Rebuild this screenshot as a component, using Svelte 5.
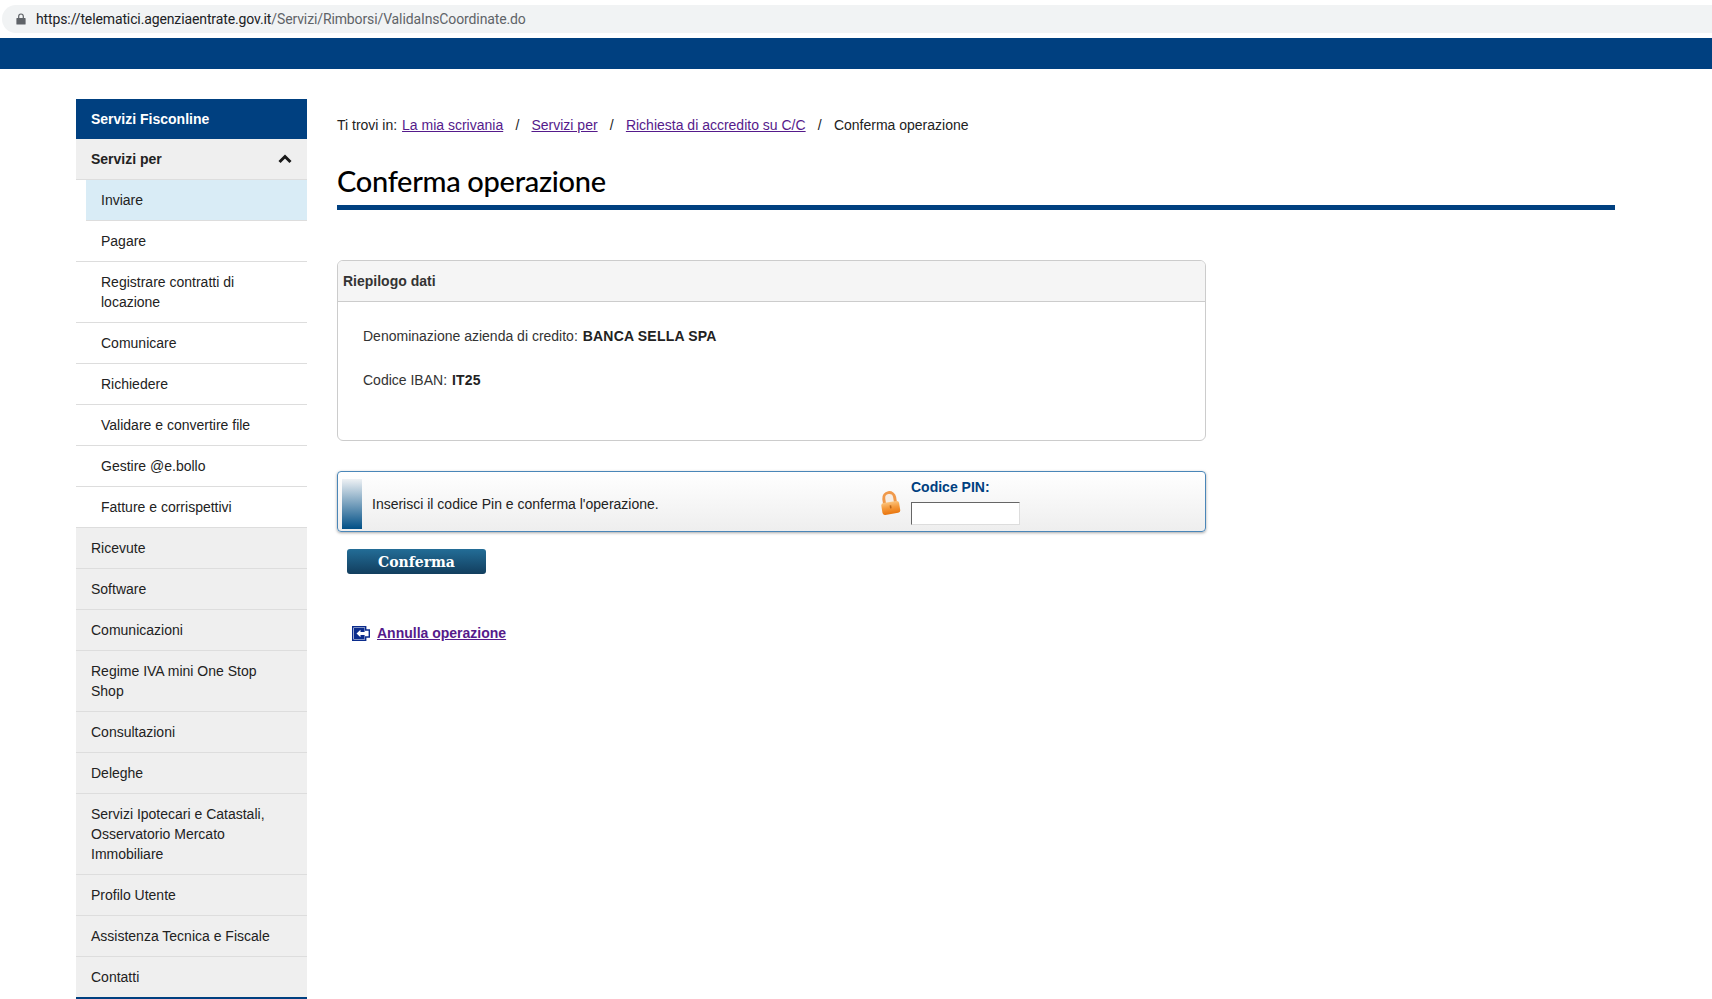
<script>
	const inner = ['Inviare', 'Pagare', 'Registrare contratti di locazione', 'Comunicare', 'Richiedere', 'Validare e convertire file', 'Gestire @e.bollo', 'Fatture e corrispettivi']
	const outer = ['Ricevute', 'Software', 'Comunicazioni', 'Regime IVA mini One Stop Shop', 'Consultazioni', 'Deleghe', 'Servizi Ipotecari e Catastali, Osservatorio Mercato Immobiliare', 'Profilo Utente', 'Assistenza Tecnica e Fiscale', 'Contatti']
</script>

<div class="chrome">
	<div class="url">
		<svg class="lock" width="10" height="12" viewBox="0 0 10 12">
			<path d="M1 5h8a.6.6 0 0 1 .6.6v5.4a.6.6 0 0 1-.6.6H1a.6.6 0 0 1-.6-.6V5.600a.6.6 0 0 1 .6-.6z" fill="#5f6368" />
			<path d="M2.700 5V3.300a2.300 2.300 0 0 1 4.600 0V5" fill="none" stroke="#5f6368" stroke-width="1.200" />
		</svg>
		<span class="host">https://telematici.agenziaentrate.gov.it</span><span class="path">/Servizi/Rimborsi/ValidaInsCoordinate.do</span>
	</div>
</div>
<div class="topbar"></div>

<div class="page">
	<nav>
		<h2>Servizi Fisconline</h2>
		<div class="group">
			<span>Servizi per</span>
			<svg width="14" height="10" viewBox="0 0 14 10">
				<path d="M1.500 8L7 2.500 12.500 8" fill="none" stroke="#1a1a1a" stroke-width="3" />
			</svg>
		</div>
		<ul class="inner">
			{#each inner as item, i}
				<li class:current={i === 0}>{item}</li>
			{/each}
		</ul>
		<ul class="outer">
			{#each outer as item}
				<li>{item}</li>
			{/each}
		</ul>
	</nav>

	<main>
		<p class="crumbs">
			Ti trovi in: <a href="#a">La mia scrivania</a><i>/</i><a href="#b">Servizi per</a><i>/</i><a href="#c">Richiesta di accredito su C/C</a><i>/</i>Conferma operazione
		</p>
		<h1>Conferma operazione</h1>

		<section class="panel">
			<h3>Riepilogo dati</h3>
			<div class="body">
				<p>Denominazione azienda di credito: <b>BANCA SELLA SPA</b></p>
				<p>Codice IBAN: <b>IT25</b></p>
			</div>
		</section>

		<div class="pin">
			<div class="strip"></div>
			<div class="msg">Inserisci il codice Pin e conferma l'operazione.</div>
			<svg class="padlock" width="22" height="26" viewBox="0 0 22 26">
				<defs>
					<linearGradient id="lockbody" x1="0" y1="0" x2="0" y2="1">
						<stop offset="0" stop-color="#fbc27a" />
						<stop offset="0.45" stop-color="#f59a3c" />
						<stop offset="1" stop-color="#e9760f" />
					</linearGradient>
				</defs>
				<g transform="rotate(-9 11 13)">
					<path d="M5.500 13V8a5.500 5.500 0 0 1 11 0v5" fill="#f6ece2" stroke="#f0994a" stroke-width="3" />
					<rect x="2" y="12" width="18" height="12" rx="2.500" fill="url(#lockbody)" />
					<rect x="10.200" y="15.500" width="1.600" height="3" fill="#b9651a" />
				</g>
			</svg>
			<label>
				<span>Codice PIN:</span>
				<input type="text" />
			</label>
		</div>

		<button type="button">Conferma</button>

		<div class="cancel">
			<svg width="18" height="15" viewBox="0 0 18 15">
				<path d="M.7.7h13v3.300h3.600v7h-3.600v3.300H.7z" fill="#fff" stroke="#0b2c8c" stroke-width="1.400" />
				<path d="M2 2h10.600v11H2z" fill="#0b2c8c" />
				<path d="M4.500 7.500L8.500 3.800v2.200h7v3h-7v2.200z" fill="#fff" />
			</svg>
			<a href="#d">Annulla operazione</a>
		</div>
	</main>
</div>

<style>
	:global(body) {
		background: #fff;
		font-family: "Liberation Sans", Arial, sans-serif;
		font-size: 14px;
		line-height: 20px;
		color: #222;
		overflow: hidden;
	}

	.chrome {
		height: 38px;
		padding: 5px 0 0 2px;
		box-sizing: border-box;
	}
	.url {
		height: 28px;
		background: #f1f3f4;
		border-radius: 14px 0 0 14px;
		display: flex;
		align-items: center;
		padding-left: 14px;
		font-family: Roboto, sans-serif;
		font-size: 14px;
		letter-spacing: -0.12px;
	}
	.lock {
		margin-right: 10px;
	}
	.host {
		color: #202124;
	}
	.path {
		color: #5f6368;
	}

	.topbar {
		height: 31px;
		background: #004080;
	}

	.page {
		display: flex;
		gap: 30px;
		padding: 30px 97px 0 76px;
	}

	nav {
		width: 231px;
		flex: none;
		border-bottom: 3px solid #004080;
	}
	h2 {
		margin: 0;
		height: 40px;
		padding: 0 15px;
		background: #004080;
		color: #fff;
		font-size: 14px;
		font-weight: bold;
		line-height: 40px;
	}
	.group {
		display: flex;
		justify-content: space-between;
		align-items: center;
		height: 40px;
		padding: 0 15px;
		background: #efefef;
		border-bottom: 1px solid #ddd;
		font-weight: bold;
	}
	ul {
		list-style: none;
		margin: 0;
		padding: 0;
	}
	li {
		padding: 10px 25px;
		border-bottom: 1px solid #ddd;
	}
	.inner .current {
		margin-left: 10px;
		padding-left: 15px;
		background: #d9ecf6;
	}
	.outer li {
		padding-left: 15px;
		padding-right: 15px;
		background: #efefef;
	}
	.outer li:last-child {
		border-bottom: none;
	}

	main {
		flex: 1;
		min-width: 0;
	}
	.crumbs {
		margin: 16px 0 0;
		color: #222;
	}
	.crumbs a:first-child {
		margin-left: 1px;
	}
	.crumbs i {
		font-style: normal;
		margin: 0 12.2px;
	}
	a {
		color: #551a8b;
	}
	h1 {
		margin: 26px 0 0;
		padding-bottom: 4px;
		border-bottom: 5px solid #004080;
		font-family: Lato, sans-serif;
		font-size: 29px;
		line-height: 40px;
		font-weight: 500;
		letter-spacing: -0.3px;
		color: #000;
	}

	.panel {
		width: 869px;
		box-sizing: border-box;
		margin-top: 50px;
		height: 181px;
		border: 1px solid #ccc;
		border-radius: 6px;
		overflow: hidden;
	}
	h3 {
		margin: 0;
		height: 40px;
		padding: 0 5px;
		background: #f5f5f5;
		border-bottom: 1px solid #ccc;
		font-size: 14px;
		line-height: 41px;
		color: #333;
	}
	.body {
		padding: 24px 25px 0;
	}
	.body p {
		margin: 0 0 24px;
		color: #333;
	}
	.body b {
		color: #222;
		margin-left: 1px;
		letter-spacing: 0.2px;
	}

	.pin {
		width: 869px;
		height: 61px;
		box-sizing: border-box;
		margin-top: 30px;
		display: flex;
		border: 1px solid #4a86b8;
		border-radius: 4px;
		background: linear-gradient(#fff, #eee);
		box-shadow: 0 1px 3px rgba(0, 0, 0, 0.35);
	}
	.strip {
		width: 20px;
		margin: 7px 0 2px 4px;
		background: linear-gradient(#eef1f4, #004f86);
	}
	.msg {
		width: 508px;
		margin-left: 10px;
		align-self: center;
		margin-top: 4px;
		color: #222;
	}
	.padlock {
		align-self: center;
		margin: 3px 10px 0 -1px;
	}
	label {
		display: flex;
		flex-direction: column;
		margin-top: 6px;
	}
	label span {
		color: #004080;
		font-weight: bold;
		line-height: 18px;
	}
	input {
		width: 109px;
		height: 23px;
		box-sizing: border-box;
		margin-top: 6px;
		padding: 0;
		border: 1px solid #ddd;
		border-top-color: #666;
		border-left-color: #666;
		background: #fff;
	}

	button {
		display: block;
		width: 139px;
		height: 25px;
		margin: 17px 0 0 10px;
		padding: 0;
		border: none;
		border-radius: 3px;
		background: linear-gradient(#236d97, #123e5e);
		color: #fff;
		font-family: "DejaVu Serif", serif;
		font-size: 14px;
		font-weight: bold;
	}

	.cancel {
		display: flex;
		align-items: center;
		gap: 7px;
		margin: 49px 0 0 15px;
	}
	.cancel a {
		font-weight: bold;
	}
</style>
